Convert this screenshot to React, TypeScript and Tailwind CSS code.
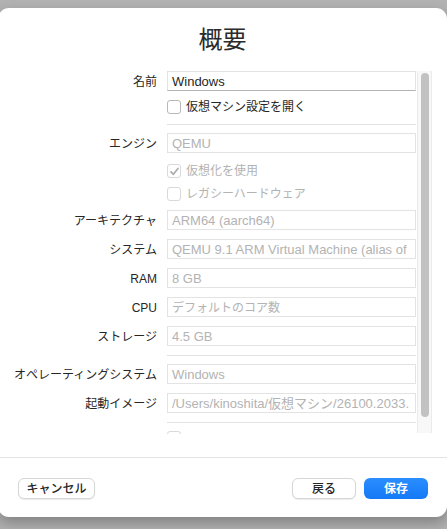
import React from "react";

const font = { fontFamily: '"Liberation Sans", "Noto Sans CJK JP", sans-serif' };

function Field({ value, active = false, cjk = false }: { value: string; active?: boolean; cjk?: boolean }) {
  return (
    <div
      className={
        "h-[20px] w-[249px] shrink-0 border border-[#e3e3e3] bg-white flex items-center pl-[4px] pt-[1px] overflow-hidden whitespace-nowrap " +
        (active ? "border-b-[#b3b3b3] text-[#1f1f1f]" : "text-[#b3b3b3]") +
        (cjk ? " text-[12px]" : " text-[13px]")
      }
    >
      {value}
    </div>
  );
}

function Row({ label, children, mt }: { label: string; children: React.ReactNode; mt: string }) {
  return (
    <div className={"flex items-center shrink-0 h-[20px] " + mt}>
      <div className="w-[159px] shrink-0 text-right text-[12px] text-[#262626] leading-none whitespace-nowrap pt-[1px]">{label}</div>
      <div className="ml-[10px] shrink-0">{children}</div>
    </div>
  );
}

function Check({ label, checked = false, disabled = false, mt }: { label: string; checked?: boolean; disabled?: boolean; mt: string }) {
  return (
    <div className={"flex items-center shrink-0 h-[16px] pl-[169px] " + mt}>
      <div
        className={
          "w-[14px] h-[14px] shrink-0 rounded-[3px] border bg-white flex items-center justify-center " +
          (disabled ? "border-[#d9d9d9]" : "border-[#b8b8b8]")
        }
      >
        {checked && (
          <svg width="11" height="11" viewBox="0 0 11 11">
            <path d="M2 5.8 L4.4 8.3 L9 2.4" fill="none" stroke="#ababab" strokeWidth="1.7" strokeLinecap="round" strokeLinejoin="round" />
          </svg>
        )}
      </div>
      <div className={"ml-[5px] text-[12px] leading-none whitespace-nowrap " + (disabled ? "text-[#b3b3b3]" : "text-[#262626]")}>
        {label}
      </div>
    </div>
  );
}

function Line({ mt }: { mt: string }) {
  return <div className={"ml-[169px] w-[249px] h-[1px] shrink-0 bg-[#e3e3e3] " + mt} />;
}

export default function App() {
  return (
    <div className="w-[447px] h-[529px] bg-[#b2b2b2] overflow-hidden pt-[8px]" style={font}>
      <div className="ml-[-2px] w-[449px] h-[509px] bg-white rounded-[11px] shadow-[0_6px_14px_rgba(0,0,0,0.28)] flex flex-col">
        <div className="h-[62px] shrink-0 pt-[17px] text-center text-[24px] leading-[30px] text-[#2b2b2b] font-normal">概要</div>
        <div className="h-[364px] shrink-0 flex overflow-hidden">
          <div className="w-[419px] shrink-0 flex flex-col overflow-hidden pt-[1px]">
            <Row label="名前" mt="mt-0">
              <Field value="Windows" active />
            </Row>
            <Check label="仮想マシン設定を開く" mt="mt-[8px]" />
            <Line mt="mt-[9px]" />
            <Row label="エンジン" mt="mt-[8px]">
              <Field value="QEMU" />
            </Row>
            <Check label="仮想化を使用" checked disabled mt="mt-[10px]" />
            <Check label="レガシーハードウェア" disabled mt="mt-[7px]" />
            <Row label="アーキテクチャ" mt="mt-[8px]">
              <Field value="ARM64 (aarch64)" />
            </Row>
            <Row label="システム" mt="mt-[9px]">
              <Field value="QEMU 9.1 ARM Virtual Machine (alias of" />
            </Row>
            <Row label="RAM" mt="mt-[9px]">
              <Field value="8 GB" />
            </Row>
            <Row label="CPU" mt="mt-[9px]">
              <Field value="デフォルトのコア数" cjk />
            </Row>
            <Row label="ストレージ" mt="mt-[9px]">
              <Field value="4.5 GB" />
            </Row>
            <Line mt="mt-[9px]" />
            <Row label="オペレーティングシステム" mt="mt-[8px]">
              <Field value="Windows" />
            </Row>
            <Row label="起動イメージ" mt="mt-[9px]">
              <Field value="/Users/kinoshita/仮想マシン/26100.2033." />
            </Row>
            <Line mt="mt-[9px]" />
            <div className="shrink-0 mt-[8px] ml-[169px] w-[14px] h-[14px] rounded-[3px] border border-[#d9d9d9] bg-white" />
          </div>
          <div className="mt-[1px] h-[362px] w-[15px] shrink-0 bg-[#f8f8f8] border-l border-r border-[#ebebeb] pt-[2px] pl-[3px]">
            <div className="w-[8px] h-[344px] rounded-full bg-[#c2c2c2]" />
          </div>
        </div>
        <div className="mt-[23px] h-[1px] shrink-0 bg-[#e3e3e3]" />
        <div className="mt-[20px] flex items-center pl-[20px] pr-[19px]">
          <button className="w-[77px] h-[21px] rounded-[6px] bg-white border border-[#d6d6d6] shadow-[0_1px_1px_rgba(0,0,0,0.08)] text-[12px] font-medium text-[#262626] leading-none">
            キャンセル
          </button>
          <div className="flex-1" />
          <button className="w-[64px] h-[21px] rounded-[6px] bg-white border border-[#d6d6d6] shadow-[0_1px_1px_rgba(0,0,0,0.08)] text-[12px] font-medium text-[#262626] leading-none">
            戻る
          </button>
          <button className="ml-[8px] w-[64px] h-[21px] rounded-[6px] bg-gradient-to-b from-[#2a8dff] to-[#1379f5] text-[12px] font-bold text-white leading-none">
            保存
          </button>
        </div>
      </div>
    </div>
  );
}
